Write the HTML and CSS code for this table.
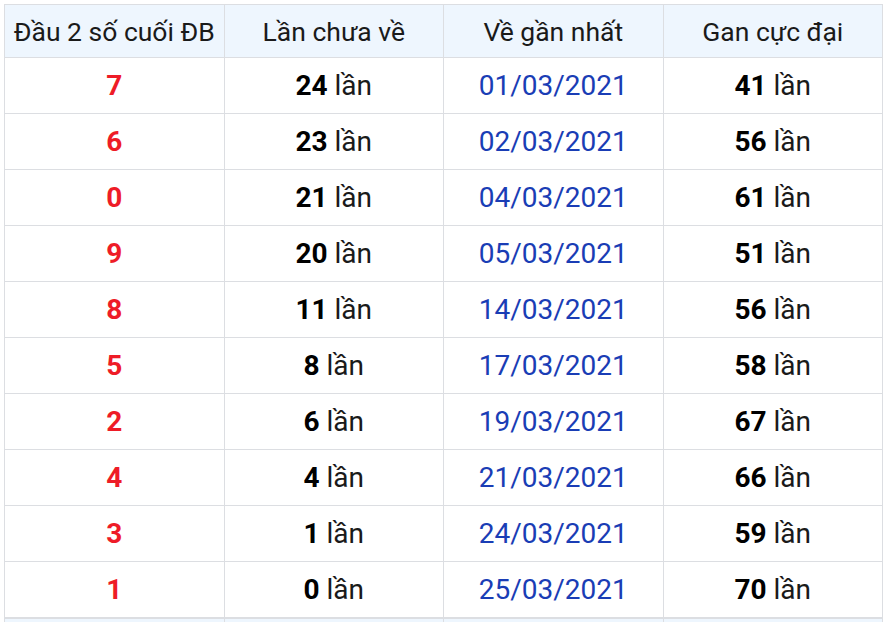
FILE: index.html
```
<!DOCTYPE html>
<html lang="vi">
<head>
<meta charset="utf-8">
<link rel="stylesheet" href="styles.css">
</head>
<body>
<table class="gan">
  <thead>
    <tr><th>Đầu 2 số cuối ĐB</th><th>Lần chưa về</th><th>Về gần nhất</th><th>Gan cực đại</th></tr>
  </thead>
  <tbody>
    <tr><td class="num">7</td><td><b>24</b> lần</td><td class="date">01/03/2021</td><td><b>41</b> lần</td></tr>
    <tr><td class="num">6</td><td><b>23</b> lần</td><td class="date">02/03/2021</td><td><b>56</b> lần</td></tr>
    <tr><td class="num">0</td><td><b>21</b> lần</td><td class="date">04/03/2021</td><td><b>61</b> lần</td></tr>
    <tr><td class="num">9</td><td><b>20</b> lần</td><td class="date">05/03/2021</td><td><b>51</b> lần</td></tr>
    <tr><td class="num">8</td><td><b>11</b> lần</td><td class="date">14/03/2021</td><td><b>56</b> lần</td></tr>
    <tr><td class="num">5</td><td><b>8</b> lần</td><td class="date">17/03/2021</td><td><b>58</b> lần</td></tr>
    <tr><td class="num">2</td><td><b>6</b> lần</td><td class="date">19/03/2021</td><td><b>67</b> lần</td></tr>
    <tr><td class="num">4</td><td><b>4</b> lần</td><td class="date">21/03/2021</td><td><b>66</b> lần</td></tr>
    <tr><td class="num">3</td><td><b>1</b> lần</td><td class="date">24/03/2021</td><td><b>59</b> lần</td></tr>
    <tr><td class="num">1</td><td><b>0</b> lần</td><td class="date">25/03/2021</td><td><b>70</b> lần</td></tr>
  </tbody>
  <tfoot>
    <tr><td></td><td></td><td></td><td></td></tr>
  </tfoot>
</table>
</body>
</html>
```
FILE: styles.css
```
html, body {
  margin: 0;
  padding: 0;
  background: #ffffff;
}
body {
  padding: 4px 0 0 4px;
  font-family: Roboto, "Noto Sans", sans-serif;
}
.gan {
  border-collapse: collapse;
  table-layout: fixed;
  width: 879px;
}
.gan th, .gan td {
  border: 1px solid #dcdee2;
  text-align: center;
  padding: 0;
}
.gan th {
  background: #eef6fe;
  height: 52px;
  font-weight: 400;
  font-size: 26.5px;
  color: #1a1a1a;
}
.gan tbody td {
  height: 55px;
  font-size: 28px;
  color: #1a1a1a;
}
.gan tbody td b {
  font-weight: 700;
  color: #000000;
}
.gan td.num {
  color: #ee1c27;
  font-weight: 700;
}
.gan td.date {
  color: #1a3db5;
}
.gan tfoot td {
  background: #eef6fe;
  border-top: 2px solid #dcdee2;
  height: 20px;
}
```
